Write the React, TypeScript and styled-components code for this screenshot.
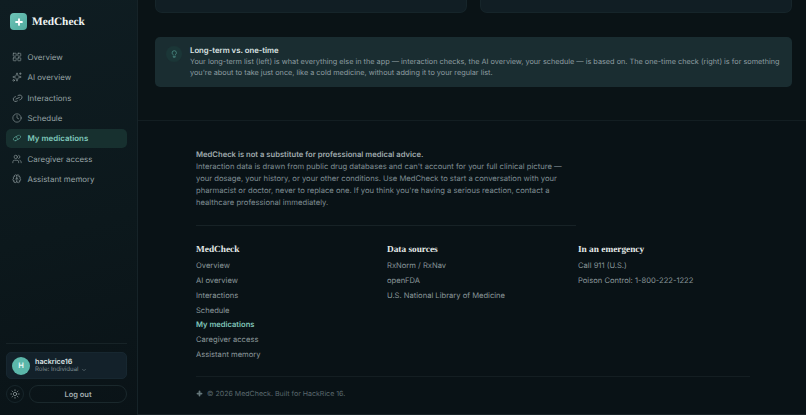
import React from "react";
import styled, { createGlobalStyle } from "styled-components";
import { LayoutGrid, Sparkles, Link2, Clock, Pill, Users, Brain, Sun, ChevronDown, Lightbulb, Plus } from "lucide-react";

const Global = createGlobalStyle`
  html, body { margin: 0; padding: 0; background: #0a1316; }
  body { font-family: Inter, "Liberation Sans", sans-serif; -webkit-font-smoothing: antialiased; text-rendering: geometricPrecision; }
  #root { height: 415px; overflow: hidden; }
  * { box-sizing: border-box; }
`;

const Shell = styled.div`
  display: flex;
  width: 806px;
  height: 415px;
  overflow: hidden;
  background: #0a1316;
`;

const Sidebar = styled.aside`
  width: 138px;
  flex: none;
  display: flex;
  flex-direction: column;
  padding: 11px 10px 12px 6px;
  background: linear-gradient(165deg, #0f1d22 0%, #0c181c 55%, #0a1317 100%);
  border-right: 1px solid #162328;
`;

const Brand = styled.div`
  display: flex;
  align-items: center;
  gap: 5px;
  margin: 2px 0 17.6px 4px;
`;

const BrandMark = styled.div`
  width: 17px;
  height: 17px;
  border-radius: 4px;
  background: linear-gradient(135deg, #6fc5b8, #4fa99d);
  display: flex;
  align-items: center;
  justify-content: center;
  color: #fff;
`;

const BrandName = styled.div`
  font-family: "Liberation Serif", serif;
  font-weight: 700;
  font-size: 11.3px;
  color: #eef3f2;
`;

const Nav = styled.nav`
  display: flex;
  flex-direction: column;
  gap: 2px;
`;

const NavItem = styled.div<{ $active?: boolean }>`
  height: 18.4px;
  display: flex;
  align-items: center;
  gap: 5.5px;
  padding-left: 6px;
  border-radius: 5px;
  font-size: 7.9px;
  font-weight: ${(p) => (p.$active ? 600 : 400)};
  color: ${(p) => (p.$active ? "#7fc9bc" : "#97a4a6")};
  background: ${(p) => (p.$active ? "#17302f" : "transparent")};
  svg { color: ${(p) => (p.$active ? "#6cbcae" : "#8a9799")}; flex: none; }
`;

const NavGlyph = styled.span<{ $turn?: number }>`
  width: 10px;
  height: 10px;
  flex: none;
  display: flex;
  align-items: center;
  justify-content: center;
  transform: rotate(${(p) => p.$turn ?? 0}deg);
`;

const Spacer = styled.div`
  flex: 1;
`;

const SideRule = styled.div`
  height: 1px;
  background: #172327;
  margin-bottom: 8px;
`;

const UserCard = styled.div`
  height: 27px;
  border-radius: 5px;
  background: #13212a;
  border: 1px solid #172730;
  display: flex;
  align-items: center;
  gap: 5px;
  padding-left: 5px;
`;

const Avatar = styled.div`
  width: 18px;
  height: 18px;
  border-radius: 50%;
  background: #5bb7aa;
  color: #eefaf7;
  font-size: 7.5px;
  font-weight: 600;
  display: flex;
  align-items: center;
  justify-content: center;
`;

const UserName = styled.div`
  font-size: 7.2px;
  font-weight: 600;
  color: #dfe6e6;
  line-height: 9px;
`;

const UserRole = styled.div`
  font-size: 6.1px;
  color: #7f8e92;
  line-height: 8px;
  display: flex;
  align-items: center;
  gap: 2px;
`;

const SideActions = styled.div`
  display: flex;
  gap: 5px;
  margin-top: 6px;
  align-items: center;
`;

const ThemeBtn = styled.div`
  width: 18px;
  height: 18px;
  border-radius: 50%;
  border: 1px solid #17252a;
  display: flex;
  align-items: center;
  justify-content: center;
  color: #98a4a6;
  flex: none;
`;

const LogoutBtn = styled.div`
  flex: 1;
  height: 18px;
  border-radius: 9px;
  border: 1px solid #1a282c;
  display: flex;
  align-items: center;
  justify-content: center;
  font-size: 7.5px;
  font-weight: 600;
  color: #a0acae;
`;

const Main = styled.main`
  flex: 1;
  min-width: 0;
  display: flex;
  flex-direction: column;
`;

const Content = styled.div`
  height: 121px;
  flex: none;
  padding: 0 14px 0 17px;
  border-bottom: 1px solid #131e22;
`;

const CardRow = styled.div`
  display: grid;
  grid-template-columns: 1fr 1fr;
  gap: 13px;
`;

const ClippedCard = styled.div`
  height: 13px;
  background: #111e24;
  border: 1px solid #16252a;
  border-top: none;
  border-radius: 0 0 7px 7px;
`;

const Tip = styled.div`
  margin-top: 24px;
  height: 50px;
  border-radius: 5px;
  background: #1a2d31;
  display: flex;
  gap: 8px;
  padding: 8px 10px 0 11px;
`;

const TipIcon = styled.div`
  width: 16px;
  height: 16px;
  margin-top: 1px;
  border-radius: 50%;
  background: #1b3637;
  color: #5fb3a6;
  display: flex;
  align-items: center;
  justify-content: center;
  flex: none;
`;

const TipTitle = styled.div`
  font-size: 7.75px;
  font-weight: 600;
  color: #dce3e3;
  line-height: 10px;
`;

const TipBody = styled.div`
  font-size: 7.3px;
  color: #8e9da1;
  line-height: 11px;
  margin-top: 1px;
`;

const Footer = styled.footer`
  flex: 1;
  padding: 28px 56px 0 58px;
  background: #091216;
  border-bottom: 1px solid #182226;
`;

const Disclaimer = styled.div`
  width: 380px;
  padding-bottom: 16px;
  border-bottom: 1px solid #172226;
  font-size: 7.65px;
  line-height: 12.1px;
  color: #7f8d93;
`;

const DisclaimerLead = styled.strong`
  display: block;
  font-weight: 600;
  color: #a0abae;
`;

const Columns = styled.div`
  display: grid;
  grid-template-columns: 191px 191px 1fr;
  margin-top: 18px;
  height: 133px;
  border-bottom: 1px solid #141e22;
`;

const ColTitle = styled.div`
  font-family: "Liberation Serif", serif;
  font-weight: 700;
  font-size: 9.3px;
  line-height: 12px;
  color: #e4e9e8;
  margin-bottom: 3px;
`;

const ColLink = styled.div<{ $active?: boolean }>`
  font-size: 7.6px;
  line-height: 14.75px;
  font-weight: ${(p) => (p.$active ? 600 : 400)};
  color: ${(p) => (p.$active ? "#80c6ba" : "#89979a")};
`;

const Copy = styled.div`
  display: flex;
  align-items: center;
  gap: 4px;
  margin-top: 12px;
  font-size: 7.05px;
  color: #5a686d;
  svg { color: #66777b; }
`;

const nav = [
  { label: "Overview", Icon: LayoutGrid, size: 10 },
  { label: "AI overview", Icon: Sparkles, size: 10 },
  { label: "Interactions", Icon: Link2, size: 11, turn: -24 },
  { label: "Schedule", Icon: Clock, size: 10 },
  { label: "My medications", Icon: Pill, size: 8, turn: 15, active: true },
  { label: "Caregiver access", Icon: Users, size: 10 },
  { label: "Assistant memory", Icon: Brain, size: 9.5 },
];

const columns = [
  {
    title: "MedCheck",
    links: ["Overview", "AI overview", "Interactions", "Schedule", "My medications", "Caregiver access", "Assistant memory"],
  },
  { title: "Data sources", links: ["RxNorm / RxNav", "openFDA", "U.S. National Library of Medicine"] },
  { title: "In an emergency", links: ["Call 911 (U.S.)", "Poison Control: 1-800-222-1222"] },
];

export default function App() {
  return (
    <Shell>
      <Global />
      <Sidebar>
        <Brand>
          <BrandMark>
            <Plus size={10} strokeWidth={4.5} />
          </BrandMark>
          <BrandName>MedCheck</BrandName>
        </Brand>
        <Nav>
          {nav.map(({ label, Icon, size, turn, active }) => (
            <NavItem key={label} $active={active}>
              <NavGlyph $turn={turn}>
                <Icon size={size} strokeWidth={1.6} />
              </NavGlyph>
              {label}
            </NavItem>
          ))}
        </Nav>
        <Spacer />
        <SideRule />
        <UserCard>
          <Avatar>H</Avatar>
          <div>
            <UserName>hackrice16</UserName>
            <UserRole>
              Role: Individual <ChevronDown size={6} />
            </UserRole>
          </div>
        </UserCard>
        <SideActions>
          <ThemeBtn>
            <Sun size={10} strokeWidth={1.7} />
          </ThemeBtn>
          <LogoutBtn>Log out</LogoutBtn>
        </SideActions>
      </Sidebar>
      <Main>
        <Content>
          <CardRow>
            <ClippedCard />
            <ClippedCard />
          </CardRow>
          <Tip>
            <TipIcon>
              <Lightbulb size={8.5} strokeWidth={1.6} />
            </TipIcon>
            <div>
              <TipTitle>Long-term vs. one-time</TipTitle>
              <TipBody>
                Your long-term list (left) is what everything else in the app — interaction checks, the AI overview, your
                schedule — is based on. The one-time check (right) is for something you're about to take just once, like a
                cold medicine, without adding it to your regular list.
              </TipBody>
            </div>
          </Tip>
        </Content>
        <Footer>
          <Disclaimer>
            <DisclaimerLead>MedCheck is not a substitute for professional medical advice.</DisclaimerLead>
            Interaction data is drawn from public drug databases and can't account for your full clinical picture — your
            dosage, your history, or your other conditions. Use MedCheck to start a conversation with your pharmacist or
            doctor, never to replace one. If you think you're having a serious reaction, contact a healthcare professional
            immediately.
          </Disclaimer>
          <Columns>
            {columns.map((c) => (
              <div key={c.title}>
                <ColTitle>{c.title}</ColTitle>
                {c.links.map((l) => (
                  <ColLink key={l} $active={l === "My medications"}>
                    {l}
                  </ColLink>
                ))}
              </div>
            ))}
          </Columns>
          <Copy>
            <Plus size={7} strokeWidth={6} />© 2026 MedCheck. Built for HackRice 16.
          </Copy>
        </Footer>
      </Main>
    </Shell>
  );
}
